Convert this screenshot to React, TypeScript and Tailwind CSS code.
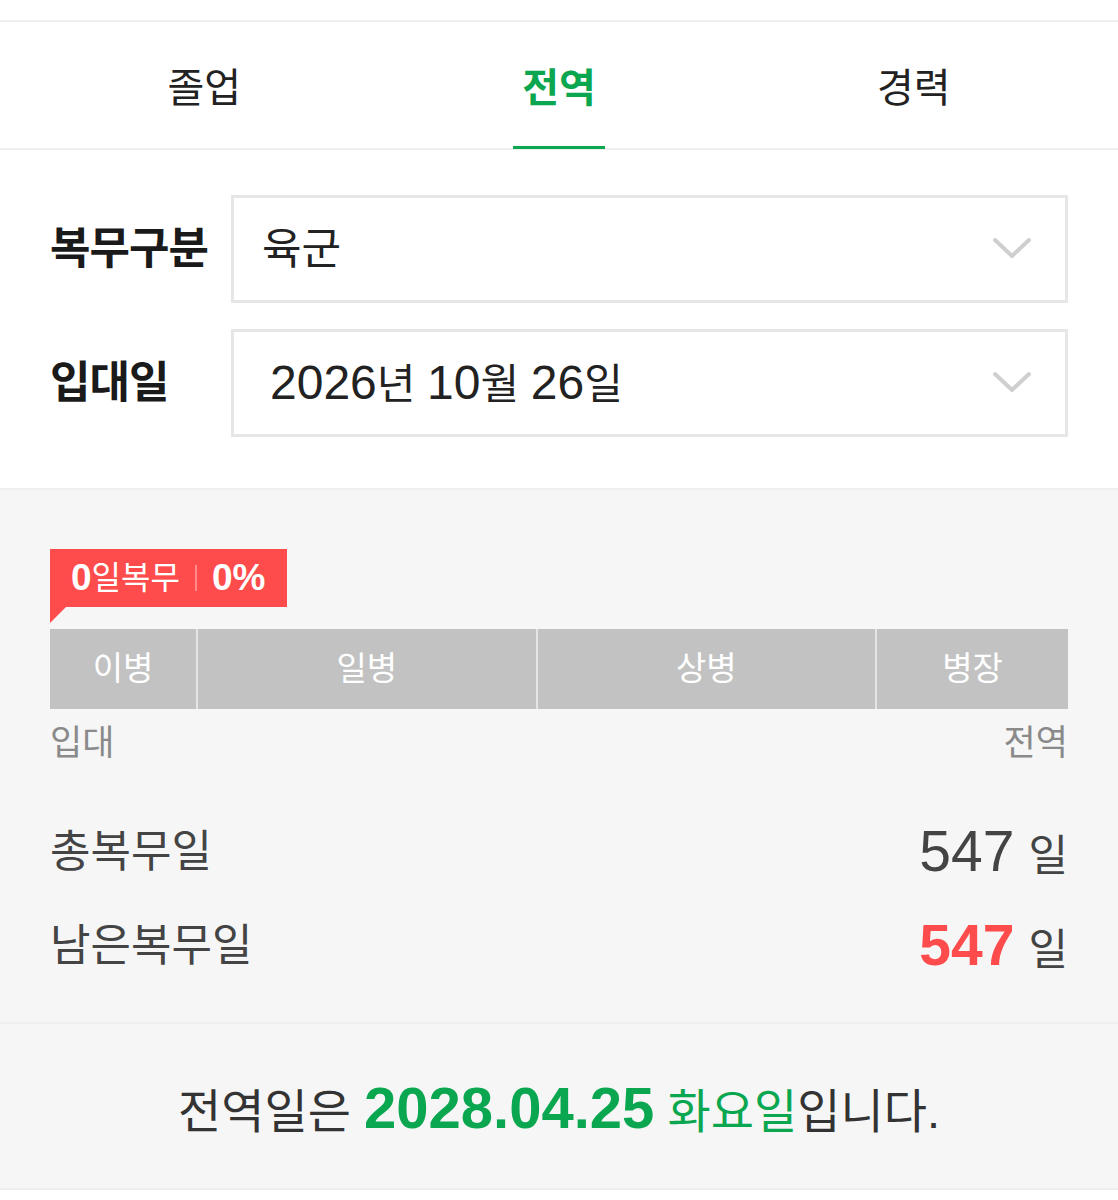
import { useState } from 'react';

const FONT = { fontFamily: '"Liberation Sans", "Noto Sans CJK KR", "Noto Sans", sans-serif' };

const tabs = ['졸업', '전역', '경력'];

const ranks = [
  { name: '이병', cols: 'w-[146px]' },
  { name: '일병', cols: 'flex-1' },
  { name: '상병', cols: 'flex-1' },
  { name: '병장', cols: 'w-[191px]' },
];

function Chevron() {
  return (
    <svg className="w-[40px] h-[26px] text-[#cfcfcf]" viewBox="0 0 40 26" fill="none" stroke="currentColor">
      <path d="M3 4l17 16L37 4" strokeWidth={4} strokeLinecap="round" strokeLinejoin="round" />
    </svg>
  );
}

function SelectRow({ label, children }: { label: string; children: React.ReactNode }) {
  return (
    <div className="flex items-center">
      <div className="w-[181px] shrink-0 text-[44px] font-bold text-[#1a1a1a] tracking-[-1px]">{label}</div>
      <div className="flex-1 h-[108px] border-[3px] border-[#e6e6e6] flex items-center justify-between pr-[33px]">
        {children}
        <Chevron />
      </div>
    </div>
  );
}

export default function App() {
  const [active, setActive] = useState(1);

  return (
    <div className="w-[1118px] bg-white pt-[20px]" style={FONT}>
      {/* tab bar */}
      <div className="border-t-2 border-b-2 border-[#eeeeee] px-[27px] flex">
        {tabs.map((t, i) => (
          <button
            key={t}
            onClick={() => setActive(i)}
            className="flex-1 h-[126px] pt-[6px] flex items-center justify-center relative"
          >
            <span className={`text-[40px] ${i === active ? 'text-[#0aa650] font-bold' : 'text-[#222]'}`}>{t}</span>
            {i === active && <span className="absolute bottom-[-1px] left-1/2 -translate-x-1/2 w-[92px] h-[3px] bg-[#0aa650]" />}
          </button>
        ))}
      </div>

      {/* form */}
      <div className="px-[50px] pt-[45px] pb-[51px] space-y-[26px]">
        <SelectRow label="복무구분">
          <span className="pl-[28px] text-[43px] text-[#222]">육군</span>
        </SelectRow>
        <SelectRow label="입대일">
          <span className="pl-[36px] text-[42px] text-[#222] flex items-baseline">
            <span className="text-[48px]">2026</span>년&nbsp;<span className="text-[48px]">10</span>월&nbsp;
            <span className="text-[48px]">26</span>일
          </span>
        </SelectRow>
      </div>

      {/* progress */}
      <div className="bg-[#f6f6f6] border-t-2 border-[#eeeeee] px-[50px] pt-[59px] pb-[34px]">
        <div className="relative inline-flex items-center h-[58px] bg-[#fe4b4b] pl-[21px] pr-[22px] text-white text-[32px]">
          <span className="font-bold text-[37px]">0</span>
          <span>일복무</span>
          <span className="mx-[15px] w-[2px] h-[26px] bg-[#ff8a8a]" />
          <span className="font-bold text-[37px]">0%</span>
          <span className="absolute left-0 top-full w-0 h-0 border-t-[16px] border-t-[#fe4b4b] border-r-[16px] border-r-transparent" />
        </div>
        <div className="mt-[22px] flex gap-[2px] bg-[#e4e4e4] h-[80px]">
          {ranks.map((r) => (
            <div key={r.name} className={`${r.cols} bg-[#c2c2c2] flex items-center justify-center text-white text-[33px]`}>
              {r.name}
            </div>
          ))}
        </div>
        <div className="flex justify-between text-[#8a8a8a] text-[35px] mt-[8px]">
          <span>입대</span>
          <span>전역</span>
        </div>

        <div className="mt-[40px] flex items-center justify-between h-[84px] text-[#444]">
          <span className="text-[44px]">총복무일</span>
          <span className="flex items-baseline gap-[14px]">
            <span className="text-[57px]">547</span>
            <span className="text-[43px]">일</span>
          </span>
        </div>
        <div className="mt-[10px] flex items-center justify-between h-[84px] text-[#444]">
          <span className="text-[44px]">남은복무일</span>
          <span className="flex items-baseline gap-[14px]">
            <span className="text-[57px] font-bold text-[#fe4b4b]">547</span>
            <span className="text-[43px]">일</span>
          </span>
        </div>
      </div>

      {/* discharge date */}
      <div className="bg-[#f6f6f6] border-t-2 border-b-2 border-[#eeeeee] h-[168px] pt-[4px] flex items-center justify-center text-[47px] text-[#333]">
        <span className="flex items-baseline">
          <span>전역일은&nbsp;</span>
          <span className="font-bold text-[#0aa650] text-[58px]">2028.04.25</span>
          <span className="text-[#0aa650]">&nbsp;화요일</span>
          <span>입니다.</span>
        </span>
      </div>
    </div>
  );
}
